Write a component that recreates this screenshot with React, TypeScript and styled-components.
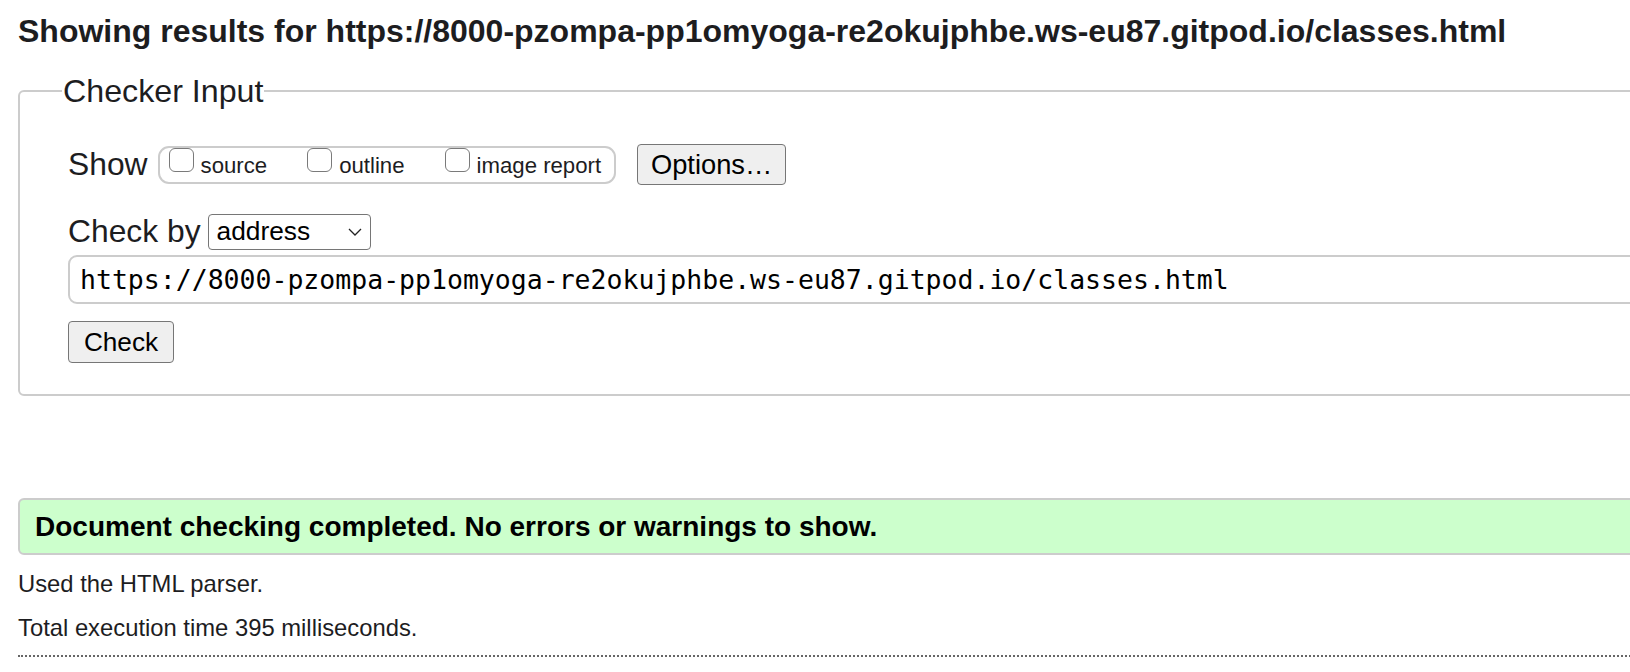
import React from "react"
import styled, { createGlobalStyle } from "styled-components"

const GlobalStyle = createGlobalStyle`
  html, body {
    margin: 0;
    padding: 0;
    background: #ffffff;
    overflow: hidden;
  }
  body {
    font-family: "Liberation Sans", Arial, Helvetica, sans-serif;
    color: #1a1a1a;
  }
`

const Page = styled.div`
  width: 1630px;
  height: 672px;
  overflow: hidden;
  padding: 0 0 0 18px;
  box-sizing: border-box;
`

const Heading = styled.h2`
  margin: 0 0 22px 0;
  padding-top: 12px;
  font-size: 32px;
  line-height: 38px;
  font-weight: bold;
  color: #1d1d1f;
  white-space: nowrap;
`

const Fieldset = styled.fieldset`
  margin: 0;
  width: 1700px;
  box-sizing: border-box;
  border: 2px solid #cccccc;
  border-radius: 6px;
  padding: 34px 0 31px 48px;
`

const Legend = styled.legend`
  margin-left: -6px;
  padding: 0 1px;
  font-size: 32.2px;
  line-height: 38px;
  color: #1d1d1f;
`

const Row = styled.div<{ $gap?: number; $h?: number }>`
  display: flex;
  align-items: center;
  height: ${(p) => (p.$h ? `${p.$h}px` : "auto")};
  margin-bottom: ${(p) => p.$gap ?? 0}px;
`

const Label = styled.span<{ $space: number }>`
  font-size: 31.8px;
  line-height: 37px;
  color: #1d1d1f;
  margin-right: ${(p) => p.$space}px;
`

const CheckGroup = styled.div`
  display: flex;
  align-items: center;
  height: 38px;
  box-sizing: border-box;
  border: 2px solid #cccccc;
  border-radius: 11px;
  padding: 0 13px 0 9px;
  gap: 40px;
  margin-right: 21px;
`

const CheckItem = styled.label`
  display: flex;
  align-items: center;
  font-size: 22.2px;
  color: #1d1d1f;
  padding-top: 3px;
`

const Box = styled.span`
  display: inline-block;
  width: 25px;
  height: 24px;
  box-sizing: border-box;
  border: 1.5px solid #7a7a7a;
  border-radius: 6px;
  background: #fff;
  margin-right: 7px;
  position: relative;
  top: -6px;
`

const Button = styled.button<{ $w: number; $h: number; $size: number }>`
  width: ${(p) => p.$w}px;
  height: ${(p) => p.$h}px;
  box-sizing: border-box;
  background: #efefef;
  border: 1.5px solid #767676;
  border-radius: 4px;
  font-family: "Liberation Sans", Arial, sans-serif;
  font-size: ${(p) => p.$size}px;
  color: #000;
  padding: 0;
`

const Select = styled.div`
  display: flex;
  align-items: center;
  justify-content: space-between;
  width: 163px;
  height: 36px;
  box-sizing: border-box;
  border: 1.5px solid #767676;
  border-radius: 4px;
  padding: 0 8px 0 8px;
  font-size: 26.3px;
  color: #000;
`

const UrlInput = styled.div`
  height: 49px;
  box-sizing: border-box;
  border: 2px solid #cccccc;
  border-radius: 9px;
  display: flex;
  align-items: center;
  padding-left: 10px;
  font-family: "DejaVu Sans Mono", "Liberation Mono", monospace;
  font-size: 26.5px;
  color: #000;
  white-space: nowrap;
  margin-bottom: 17px;
`

const Notice = styled.div`
  margin-top: 102px;
  width: 1700px;
  height: 57px;
  box-sizing: border-box;
  background: #ccffcc;
  border: 2px solid #cccccc;
  border-radius: 6px;
  display: flex;
  align-items: center;
  padding-left: 15px;
  font-size: 28px;
  font-weight: bold;
  color: #000;
`

const Para = styled.p<{ $top?: number }>`
  margin: ${(p) => p.$top ?? 0}px 0 0 0;
  font-size: 23.8px;
  line-height: 44px;
  color: #1d1d1f;
`

const Dotted = styled.div`
  margin-top: 5px;
  border-top: 2px dotted #666666;
  width: 1700px;
`

const Chevron = () => (
  <svg width="14" height="8" viewBox="0 0 14 8" fill="none">
    <path d="M1 1l6 6 6-6" stroke="#222" strokeWidth="1.3" />
  </svg>
)

export default function App() {
  const url = "https://8000-pzompa-pp1omyoga-re2okujphbe.ws-eu87.gitpod.io/classes.html"
  return (
    <Page>
      <GlobalStyle />
      <Heading>Showing results for {url}</Heading>
      <Fieldset>
        <Legend>Checker Input</Legend>
        <Row $gap={28} $h={41}>
          <Label $space={10}>Show</Label>
          <CheckGroup>
            <CheckItem>
              <Box />
              source
            </CheckItem>
            <CheckItem>
              <Box />
              outline
            </CheckItem>
            <CheckItem>
              <Box />
              image report
            </CheckItem>
          </CheckGroup>
          <Button $w={149} $h={41} $size={27.3}>Options…</Button>
        </Row>
        <Row $gap={5} $h={37}>
          <Label $space={7}>Check by</Label>
          <Select>
            address
            <Chevron />
          </Select>
        </Row>
        <UrlInput>{url}</UrlInput>
        <Row>
          <Button $w={106} $h={42} $size={26.2}>Check</Button>
        </Row>
      </Fieldset>
      <Notice>Document checking completed. No errors or warnings to show.</Notice>
      <Para $top={7}>Used the HTML parser.</Para>
      <Para>Total execution time 395 milliseconds.</Para>
      <Dotted />
    </Page>
  )
}
